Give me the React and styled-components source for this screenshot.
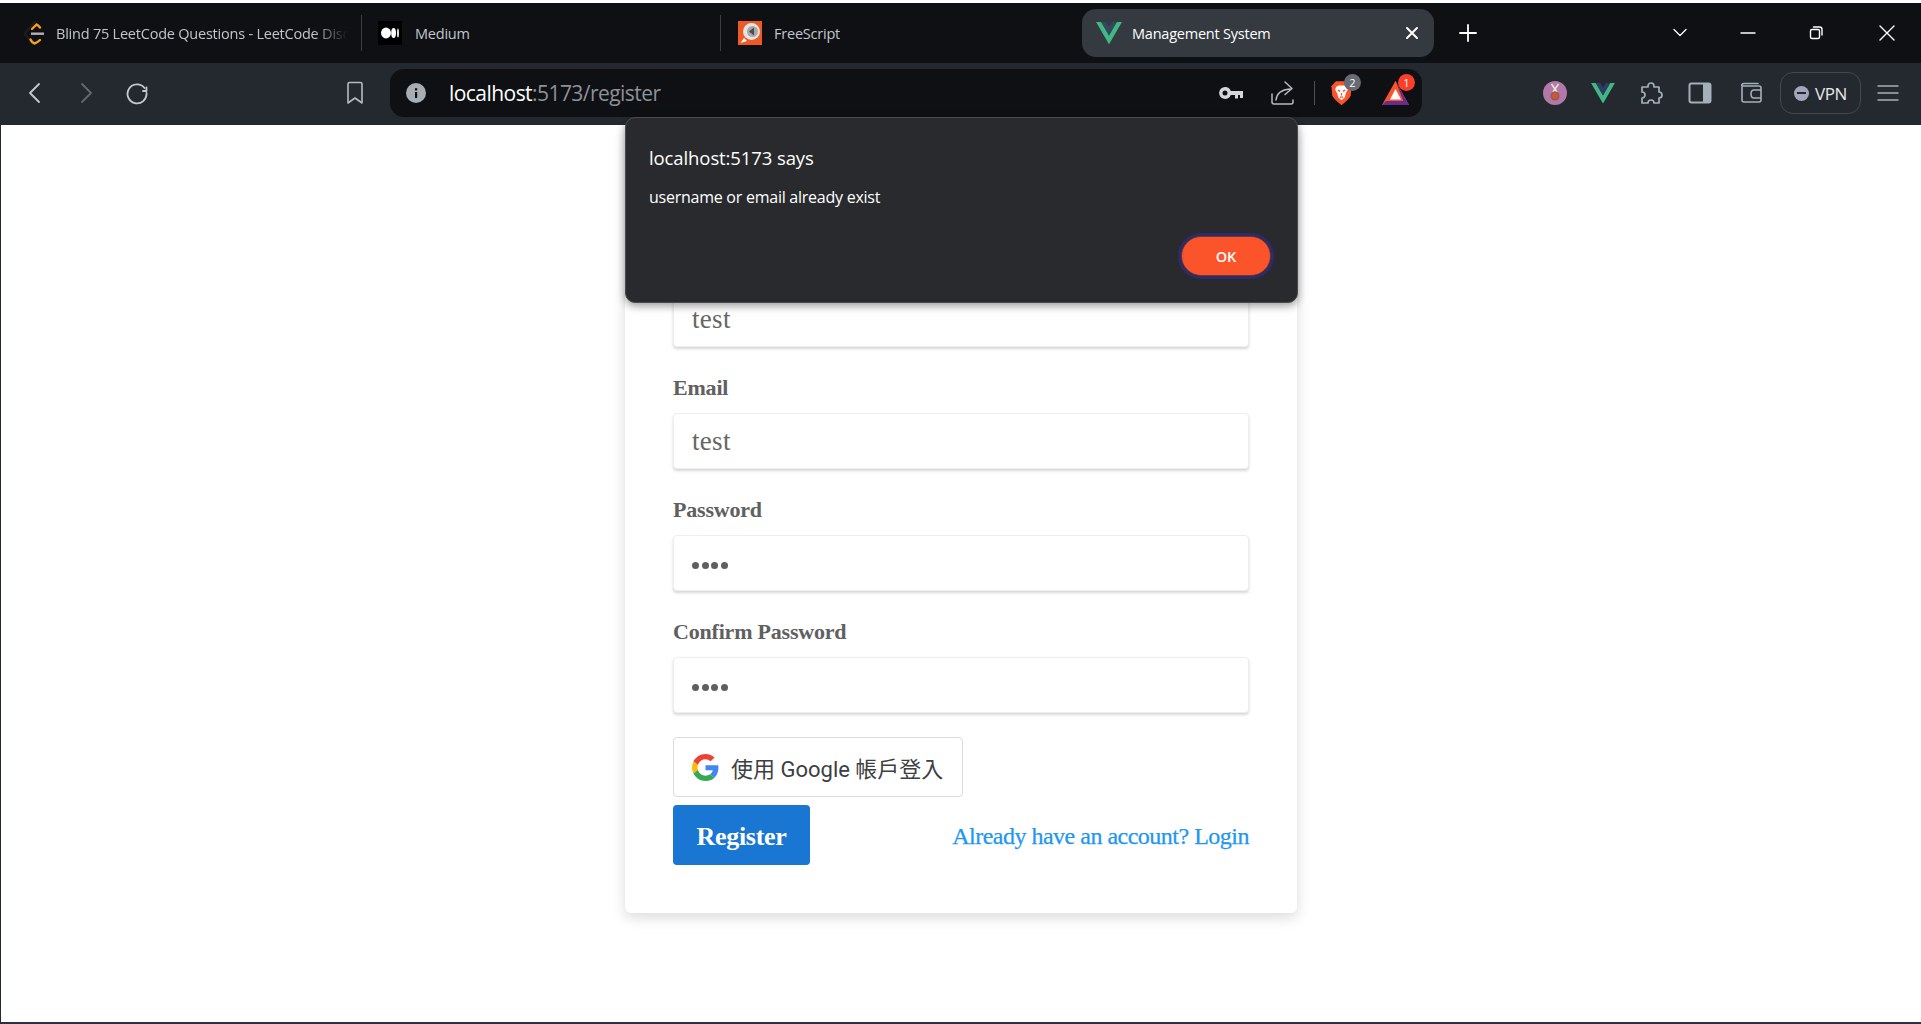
import React from "react";
import styled, { createGlobalStyle } from "styled-components";

const UI = `"Open Sans", "Noto Sans", sans-serif`;
const SERIF = `"Liberation Serif", "Noto Sans CJK TC", serif`;

const Global = createGlobalStyle`
  html, body {
    margin: 0;
    padding: 0;
    background: #fff;
    overflow: hidden;
  }
  * { box-sizing: border-box; }
`;

const Screen = styled.div`
  position: relative;
  height: 1024px;
  padding-top: 3px;
  display: flex;
  flex-direction: column;
  background: #fff;
`;

const TabBar = styled.div`
  height: 60px;
  background: #0e1014;
  display: flex;
  align-items: center;
`;

const Tab = styled.div`
  width: ${(p) => p.$w}px;
  height: 48px;
  display: flex;
  align-items: center;
  padding-left: ${(p) => p.$pad}px;
  gap: ${(p) => p.$gap}px;
  border-radius: 14px;
  background: ${(p) => (p.$active ? "#343a40" : "transparent")};
  color: ${(p) => (p.$active ? "#fff" : "#c2c6cb")};
  font: 400 14.5px ${UI};
  letter-spacing: -0.22px;
  flex: none;
`;

const TabTitle = styled.span`
  width: ${(p) => p.$w || "auto"};
  overflow: hidden;
  white-space: nowrap;
  mask-image: ${(p) => (p.$fade ? "linear-gradient(90deg, #000 88%, transparent)" : "none")};
`;

const TabSep = styled.div`
  width: 1px;
  height: 36px;
  background: #3a3f44;
  flex: none;
`;

const Glyph = styled.svg`
  flex: none;
  color: ${(p) => p.$color || "#fff"};
  margin-left: ${(p) => p.$ml || 0}px;
`;

const TabClose = styled(Glyph)`
  margin-left: auto;
  margin-right: 15px;
`;

const WindowControls = styled.div`
  margin-left: auto;
  display: flex;
  align-items: center;
  gap: 50px;
  padding-right: 25px;
`;

const Toolbar = styled.div`
  height: 62px;
  padding: 0 0 2px 26px;
  background: #23292e;
  display: flex;
  align-items: center;
`;

const NavGroup = styled.div`
  display: flex;
  align-items: center;
  gap: 33px;
`;

const BookmarkBtn = styled(Glyph)`
  margin-left: 197px;
  margin-right: 26px;
`;

const UrlBar = styled.div`
  width: 1032px;
  height: 48px;
  border-radius: 14px;
  background: #0e1014;
  display: flex;
  align-items: center;
  padding: 0 13px 0 16px;
  flex: none;
`;

const UrlText = styled.div`
  margin-left: 23px;
  font: 400 21px ${UI};
  letter-spacing: -0.55px;
  color: #fff;
`;

const UrlRest = styled.span`
  color: #8d9297;
`;

const UrlActions = styled.div`
  margin-left: auto;
  display: flex;
  align-items: center;
  gap: 26px;
`;

const UrlDivider = styled.div`
  width: 1px;
  height: 24px;
  background: #4a4f55;
  margin: 0 -14px 0 -6px;
`;

const BadgeWrap = styled.div`
  position: relative;
  width: 28px;
  height: 30px;
  display: flex;
  align-items: center;
  justify-content: center;
`;

const Badge = styled.span`
  position: absolute;
  top: -4px;
  right: -6px;
  width: 17px;
  height: 17px;
  border-radius: 50%;
  background: ${(p) => p.$bg};
  color: #fff;
  font: 400 11px/17px ${UI};
  text-align: center;
`;

const ExtGroup = styled.div`
  display: flex;
  align-items: center;
  gap: 24px;
  margin-left: 121px;
`;

const Medal = styled.div`
  width: 24px;
  height: 24px;
  border-radius: 50%;
  background: #b278a8;
  display: flex;
  align-items: center;
  justify-content: center;
  flex: none;
`;

const VpnBtn = styled.div`
  width: 81px;
  height: 42px;
  border: 1px solid #414a50;
  border-radius: 13px;
  display: flex;
  align-items: center;
  justify-content: center;
  gap: 6px;
  color: #e6e8ea;
  font: 400 17px ${UI};
  letter-spacing: -0.4px;
  margin-left: -7px;
  margin-right: -8px;
`;

const VpnDot = styled.span`
  width: 15px;
  height: 15px;
  border-radius: 50%;
  background: #a3a5bd;
  display: flex;
  align-items: center;
  justify-content: center;
  &::after {
    content: "";
    width: 9px;
    height: 2.5px;
    background: #23292e;
  }
`;

const Page = styled.main`
  flex: 1;
  border-left: 1px solid #23292e;
  border-bottom: 2px solid #2c3040;
  display: flex;
  flex-direction: column;
  align-items: center;
`;

const Card = styled.section`
  width: 672px;
  margin-top: 4px;
  padding: 112px 48px 48px;
  background: #fff;
  border-radius: 0 0 6px 6px;
  box-shadow: 0 5px 14px rgba(0, 0, 0, 0.14);
  display: flex;
  flex-direction: column;
`;

const Field = styled.div`
  display: flex;
  flex-direction: column;
  height: 122px;
`;

const Label = styled.label`
  height: 26px;
  margin-top: 12px;
  margin-bottom: 12px;
  font: 700 22px/26px ${SERIF};
  letter-spacing: -0.2px;
  color: #606060;
`;

const Input = styled.div`
  height: 56px;
  padding: 1px 18px 0;
  background: #fff;
  border: 1px solid #eeeeee;
  border-radius: 4px;
  box-shadow: 0 2px 3px rgba(0, 0, 0, 0.16);
  display: flex;
  align-items: center;
  font: 400 27px ${SERIF};
  letter-spacing: 0.3px;
  color: #666;
`;

const Dots = styled.div`
  display: flex;
  gap: 2.5px;
  margin-top: 4px;
`;

const Dot = styled.i`
  width: 7px;
  height: 7px;
  border-radius: 50%;
  background: #5f5f5f;
`;

const GoogleBtn = styled.div`
  width: 290px;
  height: 60px;
  margin-top: 8px;
  padding-left: 18px;
  border: 1px solid #dadce0;
  border-radius: 4px;
  display: flex;
  align-items: center;
  gap: 12px;
  font: 400 22px "Roboto", "Noto Sans CJK TC", sans-serif;
  color: #3c4043;
  white-space: nowrap;
`;

const Actions = styled.div`
  display: flex;
  align-items: center;
  justify-content: space-between;
  margin-top: 8px;
`;

const RegisterBtn = styled.button`
  width: 137px;
  height: 60px;
  padding: 4px 0 0;
  border: 0;
  border-radius: 4px;
  background: #1976d2;
  color: #fff;
  font: 700 26px ${SERIF};
  letter-spacing: -0.3px;
`;

const LoginLink = styled.a`
  padding-top: 2px;
  font: 400 24px ${SERIF};
  letter-spacing: -0.5px;
  -webkit-text-stroke: 0.25px #2196f3;
  color: #2196f3;
  text-decoration: none;
`;

const Dialog = styled.div`
  position: absolute;
  left: 625px;
  top: 117px;
  width: 673px;
  height: 186px;
  padding: 26px 25px 0 23px;
  background: #292a2d;
  border: 1px solid #4a4b4e;
  border-radius: 10px;
  box-shadow: 0 3px 8px rgba(0, 0, 0, 0.4);
  color: #fff;
  font-family: ${UI};
  display: flex;
  flex-direction: column;
`;

const DialogTitle = styled.div`
  font-size: 18.5px;
  line-height: 28px;
  letter-spacing: -0.1px;
`;

const DialogText = styled.div`
  margin-top: 13px;
  font-size: 16px;
  line-height: 24px;
  letter-spacing: -0.25px;
`;

const OkBtn = styled.button`
  align-self: flex-end;
  margin-top: 27px;
  margin-right: 1px;
  width: 90px;
  height: 40px;
  border: 1px solid #6b3a2a;
  border-radius: 20px;
  background: #fb542b;
  color: #fff;
  font: 600 14.5px ${UI};
  outline: 3px solid #2f2a6b;
`;

const stroke = { fill: "none", stroke: "currentColor", strokeLinecap: "round", strokeLinejoin: "round" };

const LeetIcon = () => (
  <Glyph width="24" height="30" viewBox="0 0 24 30">
    <path d="M14 3 L3.5 14 Q2.5 15.5 3.5 17 L12 27" stroke="#1c1c1c" strokeWidth="2.4" fill="none" />
    <path d="M10 11 L14.5 6.5 Q16 7 18 9.5 M8.5 21.5 Q9.5 24 12.5 25.5 Q15 25 18 22" stroke="#f89f1b" strokeWidth="2.4" fill="none" strokeLinecap="round" />
    <path d="M9 15.7 H22" stroke="#b3b3b3" strokeWidth="2.4" />
  </Glyph>
);

const MediumIcon = () => (
  <Glyph width="24" height="24" viewBox="0 0 24 24">
    <rect width="24" height="24" fill="#000" />
    <ellipse cx="8" cy="12" rx="5" ry="5.4" fill="#fff" />
    <ellipse cx="15.6" cy="12" rx="2.4" ry="5" fill="#fff" />
    <ellipse cx="20" cy="12" rx="0.9" ry="4.5" fill="#fff" />
  </Glyph>
);

const FreeScriptIcon = () => (
  <Glyph width="24" height="24" viewBox="0 0 24 24">
    <rect width="24" height="24" fill="#ee5a24" />
    <path d="M2.5 22 L6 17 L9 20 Z" fill="#fff" />
    <circle cx="13.5" cy="10.5" r="8.5" fill="#e4e4e4" />
    <circle cx="14.5" cy="10.5" r="5.5" fill="#a8a8a8" />
    <path d="M16 6.5 L11 10.5 L16 14.5 Z" fill="#4a4a4a" />
  </Glyph>
);

const VueIcon = ({ size = 24, dark = "#35495e" }) => (
  <Glyph width={size} height={size * 0.86} viewBox="0 0 256 221">
    <path d="M0 0 L128 220.8 L256 0 H204.8 L128 132.48 L50.56 0 Z" fill="#41b883" />
    <path d="M50.56 0 L128 133.12 L204.8 0 H157.44 L128 51.2 L97.92 0 Z" fill={dark} />
  </Glyph>
);

const GoogleIcon = () => (
  <Glyph width="27" height="27" viewBox="0 0 48 48">
    <path fill="#EA4335" d="M24 9.5c3.54 0 6.71 1.22 9.21 3.6l6.85-6.85C35.9 2.38 30.47 0 24 0 14.62 0 6.51 5.38 2.56 13.22l7.98 6.19C12.43 13.72 17.74 9.5 24 9.5z" />
    <path fill="#4285F4" d="M46.98 24.55c0-1.57-.15-3.09-.38-4.55H24v9.02h12.94c-.58 2.96-2.26 5.48-4.78 7.18l7.73 6c4.51-4.18 7.09-10.36 7.09-17.65z" />
    <path fill="#FBBC05" d="M10.53 28.59c-.48-1.45-.76-2.99-.76-4.59s.27-3.14.76-4.59l-7.98-6.19C.92 16.46 0 20.12 0 24c0 3.88.92 7.54 2.56 10.78l7.97-6.19z" />
    <path fill="#34A853" d="M24 48c6.48 0 11.93-2.13 15.89-5.81l-7.73-6c-2.15 1.45-4.92 2.3-8.16 2.3-6.26 0-11.57-4.22-13.47-9.91l-7.98 6.19C6.51 42.62 14.62 48 24 48z" />
  </Glyph>
);

const Line = ({ w = 24, h = 24, d, color = "#fff", sw = 2, ml }) => (
  <Glyph width={w} height={h} viewBox={`0 0 ${w} ${h}`} $color={color} $ml={ml}>
    <path d={d} {...stroke} strokeWidth={sw} />
  </Glyph>
);

const BraveIcon = () => (
  <Glyph width="21" height="26" viewBox="0 0 25 30">
    <path d="M6 1 H19 L22 4 L24.5 7 L23.5 18 Q22 22 12.5 29.5 Q3 22 1.5 18 L0.5 7 L3 4 Z" fill="#fb542b" />
    <path d="M6 8 L9 6 H16 L19 8 L20 11 L17.5 15.5 L16.5 20 L12.5 23.5 L8.5 20 L7.5 15.5 L5 11 Z" fill="#fff" />
    <path d="M8 11.5 L11 13 M17 11.5 L14 13 M12.5 15 V18 M10.5 20 H14.5" stroke="#fb542b" strokeWidth="1.6" fill="none" />
  </Glyph>
);

const RewardsIcon = () => (
  <Glyph width="27" height="24" viewBox="0 0 27 24">
    <path d="M13.5 0 L27 24 H0 Z" fill="#fb542b" />
    <path d="M13.5 0 L27 24 H0 L4 20 H21 Z" fill="#662d91" />
    <path d="M13.5 0 L21 20 H4 Z" fill="#fb542b" />
    <path d="M13.5 8 L19 18.5 H8 Z" fill="#fff" />
  </Glyph>
);

const App = () => (
  <>
    <Global />
    <Screen>
      <TabBar>
        <Tab $w={361} $pad={22} $gap={10}>
          <LeetIcon />
          <TabTitle $w="292px" $fade>Blind 75 LeetCode Questions - LeetCode Discuss</TabTitle>
        </Tab>
        <TabSep />
        <Tab $w={358} $pad={16} $gap={13}>
          <MediumIcon />
          <TabTitle>Medium</TabTitle>
        </Tab>
        <TabSep />
        <Tab $w={361} $pad={17} $gap={12}>
          <FreeScriptIcon />
          <TabTitle>FreeScript</TabTitle>
        </Tab>
        <Tab $w={352} $pad={14} $gap={10} $active>
          <VueIcon size={26} />
          <TabTitle>Management System</TabTitle>
          <TabClose width="14" height="14" viewBox="0 0 14 14">
            <path d="M2 2 L12 12 M12 2 L2 12" {...stroke} strokeWidth="2" />
          </TabClose>
        </Tab>
        <Line w={20} h={20} d="M10 2 V18 M2 10 H18" sw={1.8} ml={24} />
        <WindowControls>
          <Line w={18} h={18} d="M3 5.5 L9 11.5 L15 5.5" sw={1.3} />
          <Line w={18} h={18} d="M2 9 H16" sw={1.3} />
          <Line w={18} h={18} d="M3.5 7 Q3.5 5.5 5 5.5 H11 Q12.5 5.5 12.5 7 V13 Q12.5 14.5 11 14.5 H5 Q3.5 14.5 3.5 13 Z M6.5 3 H12.5 Q15 3 15 5.5 V11" sw={1.4} />
          <Line w={18} h={18} d="M2 2 L16 16 M16 2 L2 16" sw={1.4} ml={3} />
        </WindowControls>
      </TabBar>
      <Toolbar>
        <NavGroup>
          <Line w={18} h={24} d="M13 3 L4 12 L13 21" color="#c4c9cd" sw={1.8} />
          <Line w={18} h={24} d="M5 3 L14 12 L5 21" color="#62686d" sw={1.8} />
          <Line w={24} h={24} d="M19.5 7 A9.5 9.5 0 1 0 21.5 12 M18 10 L21.5 10 L21.5 6.5" color="#c4c9cd" sw={1.8} ml={-3} />
        </NavGroup>
        <BookmarkBtn width="18" height="24" viewBox="0 0 18 24" $color="#b5bbc0">
          <path d="M2 3 Q2 1.5 3.5 1.5 H14.5 Q16 1.5 16 3 V22 L9 17 L2 22 Z" {...stroke} strokeWidth="1.6" />
        </BookmarkBtn>
        <UrlBar>
          <Glyph width="20" height="20" viewBox="0 0 20 20">
            <circle cx="10" cy="10" r="10" fill="#a7adb3" />
            <rect x="9" y="9" width="2.2" height="6" fill="#0e1014" />
            <rect x="9" y="5.2" width="2.2" height="2.2" fill="#0e1014" />
          </Glyph>
          <UrlText>localhost<UrlRest>:5173/register</UrlRest></UrlText>
          <UrlActions>
            <Glyph width="26" height="14" viewBox="0 0 26 14">
              <path d="M7 1 A6 6 0 1 0 12.8 9 H17 V12.5 H20 V9 H22 V12 H25 V5 H12.8 A6 6 0 0 0 7 1 Z M7 4.5 A2.5 2.5 0 1 1 7 9.5 A2.5 2.5 0 1 1 7 4.5 Z" fill="#d4d7da" fillRule="evenodd" />
            </Glyph>
            <Line w={24} h={26} d="M2 14 V22 Q2 24 4 24 H21 Q23 24 23 22 V20 M6 20 Q7 10 20 9 M15 2 L22 8.5 L15 14.5" color="#b5bbc0" sw={1.5} />
            <UrlDivider />
            <BadgeWrap>
              <BraveIcon />
              <Badge $bg="#686b74">2</Badge>
            </BadgeWrap>
            <BadgeWrap>
              <RewardsIcon />
              <Badge $bg="#fb3f2b">1</Badge>
            </BadgeWrap>
          </UrlActions>
        </UrlBar>
        <ExtGroup>
          <Medal>
            <Glyph width="18" height="20" viewBox="0 0 18 20">
              <path d="M5.5 1 L11 9 M12.5 1 L7 9" stroke="#e8e2d8" strokeWidth="1.6" fill="none" />
              <circle cx="9" cy="13" r="4.5" fill="#8f5a60" />
              <circle cx="9" cy="13" r="3" fill="#d2562a" />
            </Glyph>
          </Medal>
          <VueIcon size={24} dark="#2f3d66" />
          <Glyph width="24" height="24" viewBox="0 0 24 24" $color="#a4b0b8">
            <path d="M9 5 A3 3 0 0 1 15 5 V6 H20 V11 A3 3 0 0 1 20 17 V22 H15 A3 3 0 0 0 9 22 H3 V17 A3 3 0 0 0 3 11 V6 H9 Z" {...stroke} strokeWidth="1.7" />
          </Glyph>
          <Glyph width="24" height="22" viewBox="0 0 24 22" $ml={1}>
            <rect x="1.5" y="1.5" width="21" height="19" rx="2" fill="none" stroke="#a4b0b8" strokeWidth="2" />
            <rect x="15" y="1.5" width="7.5" height="19" fill="#a4b0b8" />
          </Glyph>
          <Glyph width="24" height="22" viewBox="0 0 24 22" $color="#a4b0b8" $ml={3}>
            <path d="M3 5 V18 Q3 20 5 20 H20 Q22 20 22 18 V16 M22 8 V6 Q22 4 20 4 H4 Q2 4 3 2.5 Q3.5 1.5 5 1.5 H19 M22 8 H15 Q12 8 12 12 Q12 16 15 16 H22 Z" {...stroke} strokeWidth="1.6" />
          </Glyph>
          <VpnBtn>
            <VpnDot />
            VPN
          </VpnBtn>
          <Line w={22} h={18} d="M1 2 H21 M1 9 H21 M1 16 H21" color="#a4b0b8" sw={1.5} />
        </ExtGroup>
      </Toolbar>
      <Page>
        <Card>
          <Field>
            <Label>Username</Label>
            <Input>test</Input>
          </Field>
          <Field>
            <Label>Email</Label>
            <Input>test</Input>
          </Field>
          <Field>
            <Label>Password</Label>
            <Input>
              <Dots><Dot /><Dot /><Dot /><Dot /></Dots>
            </Input>
          </Field>
          <Field>
            <Label>Confirm Password</Label>
            <Input>
              <Dots><Dot /><Dot /><Dot /><Dot /></Dots>
            </Input>
          </Field>
          <GoogleBtn>
            <GoogleIcon />
            使用 Google 帳戶登入
          </GoogleBtn>
          <Actions>
            <RegisterBtn>Register</RegisterBtn>
            <LoginLink href="#">Already have an account? Login</LoginLink>
          </Actions>
        </Card>
      </Page>
      <Dialog>
        <DialogTitle>localhost:5173 says</DialogTitle>
        <DialogText>username or email already exist</DialogText>
        <OkBtn>OK</OkBtn>
      </Dialog>
    </Screen>
  </>
);

export default App;
